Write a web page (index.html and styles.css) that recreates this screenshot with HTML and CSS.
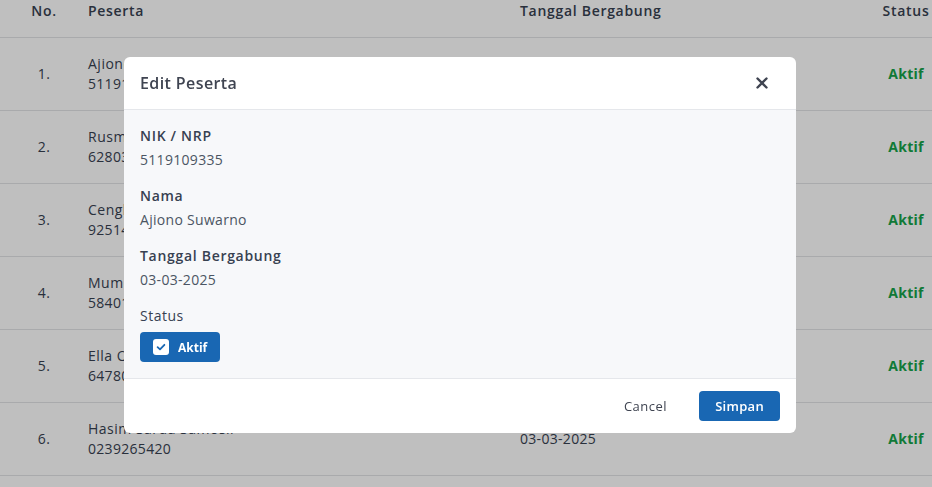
FILE: index.html
```html
<!DOCTYPE html>
<html lang="id">
<head>
<meta charset="utf-8">
<title>Edit Peserta</title>
<link rel="stylesheet" href="styles.css">
</head>
<body>
<div class="page">
  <div class="table">
    <div class="row head">
      <div class="cell c-no">No.</div>
      <div class="cell">Peserta</div>
      <div class="cell">Tanggal Bergabung</div>
      <div class="cell c-status">Status</div>
    </div>
    <div class="row">
      <div class="cell c-no">1.</div>
      <div class="cell person"><span class="name">Ajiono Suwarno</span><span class="nik">5119109335</span></div>
      <div class="cell">03-03-2025</div>
      <div class="cell c-status aktif">Aktif</div>
    </div>
    <div class="row">
      <div class="cell c-no">2.</div>
      <div class="cell person"><span class="name">Rusmini Hartati</span><span class="nik">6280351742</span></div>
      <div class="cell">03-03-2025</div>
      <div class="cell c-status aktif">Aktif</div>
    </div>
    <div class="row">
      <div class="cell c-no">3.</div>
      <div class="cell person"><span class="name">Cengkal Wibisono</span><span class="nik">9251476038</span></div>
      <div class="cell">03-03-2025</div>
      <div class="cell c-status aktif">Aktif</div>
    </div>
    <div class="row">
      <div class="cell c-no">4.</div>
      <div class="cell person"><span class="name">Mumpuni Lestari</span><span class="nik">5840192736</span></div>
      <div class="cell">03-03-2025</div>
      <div class="cell c-status aktif">Aktif</div>
    </div>
    <div class="row">
      <div class="cell c-no">5.</div>
      <div class="cell person"><span class="name">Ella Oktaviani</span><span class="nik">6478023519</span></div>
      <div class="cell">03-03-2025</div>
      <div class="cell c-status aktif">Aktif</div>
    </div>
    <div class="row">
      <div class="cell c-no">6.</div>
      <div class="cell person"><span class="name">Hasim Sarda Samosir</span><span class="nik">0239265420</span></div>
      <div class="cell">03-03-2025</div>
      <div class="cell c-status aktif">Aktif</div>
    </div>
  </div>
</div>

<div class="overlay">
  <div class="modal">
    <div class="modal-head">
      <h2 class="modal-title">Edit Peserta</h2>
      <button class="close" aria-label="Tutup">
        <svg width="12" height="12" viewBox="0 0 12 12"><path d="M1.5 1.5 L10.5 10.5 M10.5 1.5 L1.5 10.5" stroke="#3f4451" stroke-width="2.4" stroke-linecap="round" fill="none"/></svg>
      </button>
    </div>
    <div class="modal-body">
      <div class="field">
        <div class="label">NIK / NRP</div>
        <div class="value">5119109335</div>
      </div>
      <div class="field">
        <div class="label">Nama</div>
        <div class="value">Ajiono Suwarno</div>
      </div>
      <div class="field">
        <div class="label">Tanggal Bergabung</div>
        <div class="value">03-03-2025</div>
      </div>
      <div class="field">
        <div class="label status-label">Status</div>
        <button class="toggle">
          <span class="check">
            <svg width="10" height="10" viewBox="0 0 10 10"><path d="M1.6 5.2 L4 7.4 L8.4 2.8" stroke="#1967b3" stroke-width="1.8" stroke-linecap="round" stroke-linejoin="round" fill="none"/></svg>
          </span>
          <span>Aktif</span>
        </button>
      </div>
    </div>
    <div class="modal-foot">
      <button class="btn-cancel">Cancel</button>
      <button class="btn-save">Simpan</button>
    </div>
  </div>
</div>
</body>
</html>
```

FILE: styles.css
```css
* { box-sizing: border-box; }
html, body { margin: 0; padding: 0; }
body {
  font-family: "Open Sans", "Liberation Sans", sans-serif;
  font-size: 14px;
  letter-spacing: 0.3px;
  color: #374151;
  background: #ffffff;
  width: 932px;
  height: 487px;
  overflow: hidden;
}
.table { display: flex; flex-direction: column; }
.row {
  display: grid;
  grid-template-columns: 88px 432px 360px 52px;
  align-items: center;
  border-bottom: 1px solid #e2e3e6;
  height: 73px;
  line-height: 20px;
}
.row.head {
  height: 38px;
  align-items: start;
  font-weight: 600;
  line-height: 22px;
  letter-spacing: 0.7px;
}
.cell { white-space: nowrap; }
.c-no { text-align: center; }
.c-status { text-align: center; }
.person { display: flex; flex-direction: column; }
.name { font-weight: 500; letter-spacing: 0.5px; }
.aktif { color: #16a34a; font-weight: 700; letter-spacing: 0.3px; }

.overlay {
  position: fixed;
  inset: 0;
  background: rgba(0, 0, 0, 0.25);
  display: flex;
  align-items: flex-start;
  padding: 57px 0 0 124px;
}
.modal {
  width: 672px;
  background: #ffffff;
  border-radius: 6px;
  overflow: hidden;
  display: flex;
  flex-direction: column;
}
.modal-head {
  height: 53px;
  display: flex;
  align-items: center;
  justify-content: space-between;
  padding: 0 16px;
  border-bottom: 1px solid #e5e7eb;
}
.modal-title {
  margin: 0;
  font-size: 16px;
  font-weight: 600;
  color: #3f4451;
  line-height: 24px;
  letter-spacing: 0.4px;
}
.close {
  border: 0;
  background: none;
  padding: 0;
  margin-right: 12px;
  width: 12px;
  height: 12px;
  display: flex;
}
.modal-body {
  background: #f7f8fa;
  padding: 16px;
  display: flex;
  flex-direction: column;
  gap: 16px;
  border-bottom: 1px solid #e5e7eb;
}
.field { display: flex; flex-direction: column; gap: 4px; }
.label { font-weight: 600; line-height: 20px; color: #374151; letter-spacing: 0.7px; }
.status-label { font-weight: 500; margin-bottom: 2px; letter-spacing: 0.5px; }
.value { line-height: 20px; color: #4b5563; }
.toggle {
  align-self: flex-start;
  display: flex;
  align-items: center;
  gap: 9px;
  height: 30px;
  padding: 0 13px 0 13px;
  background: #1967b3;
  color: #ffffff;
  border: 0;
  border-radius: 4px;
  font-family: inherit;
  font-size: 12px;
  font-weight: 700;
  letter-spacing: 0;
}
.check {
  width: 16px;
  height: 16px;
  background: #ffffff;
  border-radius: 3px;
  display: flex;
  align-items: center;
  justify-content: center;
}
.modal-foot {
  height: 54px;
  display: flex;
  align-items: center;
  justify-content: flex-end;
  gap: 16px;
  padding: 0 16px;
}
.btn-cancel {
  border: 0;
  background: none;
  font-family: inherit;
  font-size: 13px;
  letter-spacing: 0.5px;
  color: #3f4451;
  padding: 0 16px;
  height: 30px;
}
.btn-save {
  border: 0;
  background: #1967b3;
  color: #ffffff;
  font-family: inherit;
  font-size: 13px;
  font-weight: 600;
  letter-spacing: 0.3px;
  padding: 0 16px;
  height: 30px;
  border-radius: 4px;
}
```
